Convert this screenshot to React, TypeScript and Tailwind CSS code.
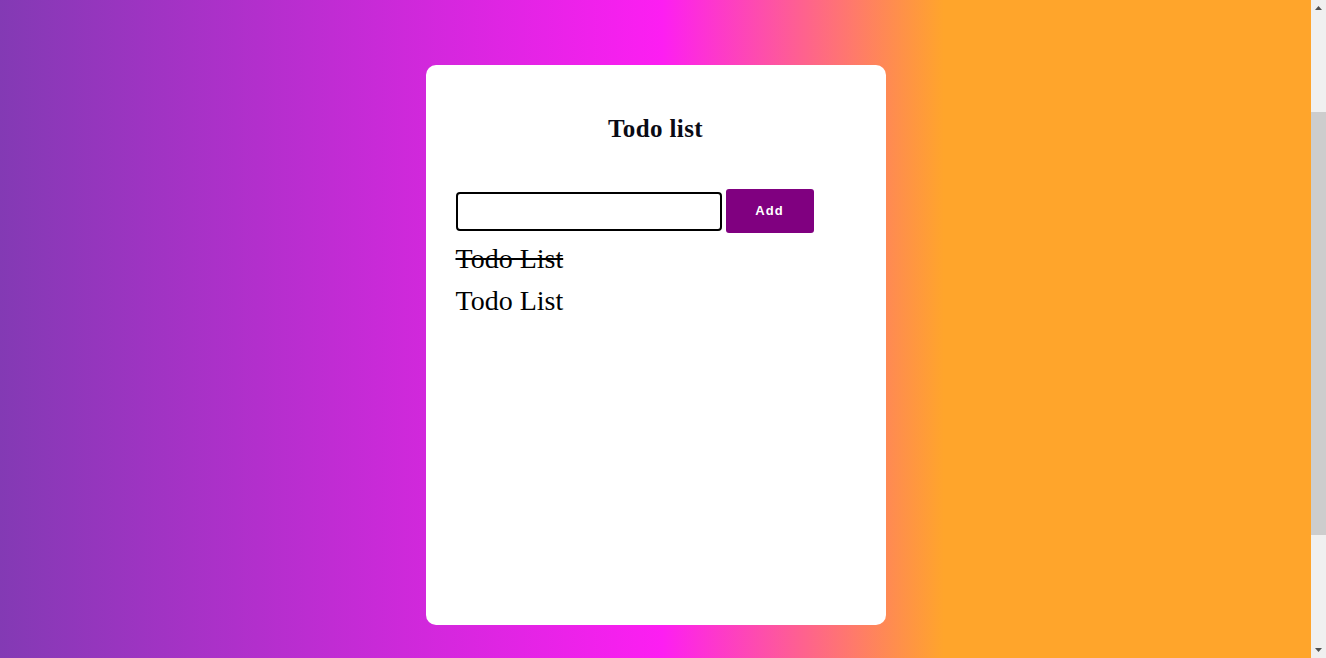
import React from "react";

export default function App() {
  return (
    <div className="flex h-[658px] w-full overflow-hidden">
      <div className="flex flex-1 justify-center bg-[linear-gradient(to_right,#833ab4_0%,#fd1ef2_50.5%,#ffa52b_72%,#ffa52b_100%)] pt-[65px]">
        <div className="h-[560px] w-[460px] rounded-[10px] bg-white px-[30px]">
          <h2 className="mt-[49px] text-center font-['Liberation_Serif',serif] text-[25px] font-bold leading-[29px] tracking-[0.4px] text-[#0a0a14]">
            Todo list
          </h2>
          <div className="mt-[46px] flex items-center gap-[4px]">
            <input
              type="text"
              className="h-[39px] w-[266px] rounded-[4px] border-2 border-black bg-white outline-none"
            />
            <button className="h-[44px] w-[88px] rounded-[3px] bg-[#800080] font-['Liberation_Sans',sans-serif] text-[13px] font-bold tracking-[1px] text-white">
              Add
            </button>
          </div>
          <ul className="mt-[10px] font-['Liberation_Serif',serif] text-[28px] leading-[32px] text-black">
            <li className="mb-[10px] line-through">Todo List</li>
            <li className="mb-[10px]">Todo List</li>
          </ul>
        </div>
      </div>
      <div className="flex w-[15px] flex-col bg-[#f0f0f0]">
        <div className="flex h-[15px] items-center justify-center">
          <svg width="7" height="5" viewBox="0 0 7 5">
            <path d="M0 5 L3.5 1 L7 5 Z" fill="#505050" />
          </svg>
        </div>
        <div className="mt-[97px] h-[423px] bg-[#cdcdcd]" />
        <div className="flex-1" />
        <div className="flex h-[15px] items-center justify-center">
          <svg width="7" height="5" viewBox="0 0 7 5">
            <path d="M0 0 L3.5 4 L7 0 Z" fill="#505050" />
          </svg>
        </div>
      </div>
    </div>
  );
}
